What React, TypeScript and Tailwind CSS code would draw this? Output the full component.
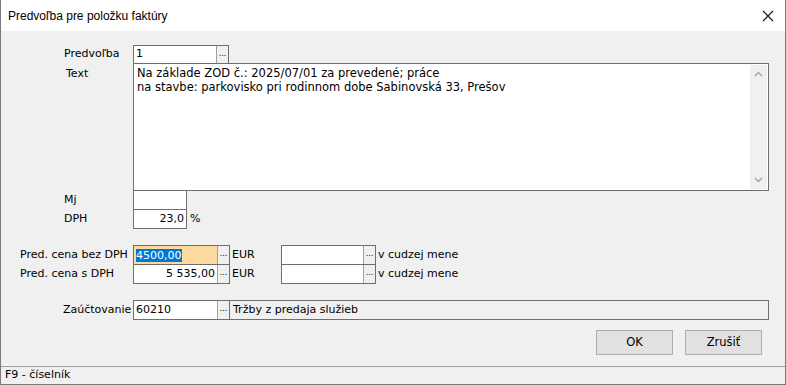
import React from "react";

const body = { fontFamily: '"DejaVu Sans", Verdana, sans-serif' };

function Dots() {
  return (
    <div className="w-[12px] h-full flex items-center justify-center bg-[#f0f0f0] border-l border-[#a0a0a0] text-[8px] leading-none text-black pb-[2px]">
      ...
    </div>
  );
}

function Field({
  width,
  value,
  right,
  bg = "bg-white",
  picker = true,
  children,
}: {
  width: string;
  value?: string;
  right?: boolean;
  bg?: string;
  picker?: boolean;
  children?: React.ReactNode;
}) {
  return (
    <div className={`flex h-full border border-[#6e6e6e] ${bg}`}>
      <div className={`${width} h-full flex items-center px-[2px] ${right ? "justify-end" : ""}`}>
        {children ?? value}
      </div>
      {picker && <Dots />}
    </div>
  );
}

function Label({ pl, children }: { pl: string; children: React.ReactNode }) {
  return <div className={`w-[132px] ${pl} flex items-center`}>{children}</div>;
}

export default function App() {
  return (
    <div
      className="w-[786px] h-[385px] flex flex-col bg-[#f0f0f0] border-x border-b border-[#7a7a7a] text-[11px] text-black overflow-hidden"
      style={body}
    >
      {/* title bar */}
      <div className="h-[31px] bg-white flex items-center justify-between pl-[7px] pr-[9px] shrink-0">
        <span className="text-[12px]" style={{ fontFamily: '"Liberation Sans", Arial, sans-serif' }}>
          Predvoľba pre položku faktúry
        </span>
        <svg width="12" height="12" viewBox="0 0 12 12" className="mr-[2px]">
          <path d="M1 1 L11 11 M11 1 L1 11" stroke="#111" strokeWidth="1.1" />
        </svg>
      </div>

      <div className="flex-1 flex flex-col pt-[14px]">
        {/* Predvoľba */}
        <div className="flex h-[19px]">
          <Label pl="pl-[63px]">Predvoľba</Label>
          <Field width="w-[82px]" value="1" />
        </div>

        {/* Text */}
        <div className="flex -mt-px">
          <div className="w-[132px] pl-[65px] pt-[3px]">Text</div>
          <div className="w-[636px] h-[128px] border border-[#6e6e6e] bg-white flex">
            <div className="flex-1 px-[3px] pt-[2px] leading-[14px] text-[11.5px]">
              <div>Na základe ZOD č.: 2025/07/01 za prevedené; práce</div>
              <div>na stavbe: parkovisko pri rodinnom dobe Sabinovská 33, Prešov</div>
            </div>
            <div className="w-[17px] my-px mr-px bg-[#f0f0f0] flex flex-col items-center justify-between py-[6px]">
              <svg width="9" height="6" viewBox="0 0 9 6">
                <path d="M1 5 L4.5 1.5 L8 5" stroke="#a3a3a3" strokeWidth="1.4" fill="none" />
              </svg>
              <svg width="9" height="6" viewBox="0 0 9 6">
                <path d="M1 1 L4.5 4.5 L8 1" stroke="#a3a3a3" strokeWidth="1.4" fill="none" />
              </svg>
            </div>
          </div>
        </div>

        {/* Mj */}
        <div className="flex h-[20px] -mt-px">
          <Label pl="pl-[63px]">Mj</Label>
          <Field width="w-[52px]" picker={false} />
        </div>

        {/* DPH */}
        <div className="flex h-[20px] -mt-px">
          <Label pl="pl-[63px]">DPH</Label>
          <Field width="w-[52px]" value="23,0" right picker={false} />
          <span className="ml-[3px] flex items-center">%</span>
        </div>

        {/* ceny */}
        <div className="flex h-[20px] mt-[16px]">
          <Label pl="pl-[19px]">Pred. cena bez DPH</Label>
          <Field width="w-[83px]" bg="bg-[#fcd99d]">
            <span className="bg-[#0078d7] text-white leading-[13px]">4500,00</span>
          </Field>
          <span className="w-[51px] pl-[2px] flex items-center">EUR</span>
          <Field width="w-[81px]" />
          <span className="pl-[2px] flex items-center">v cudzej mene</span>
        </div>
        <div className="flex h-[20px] -mt-px">
          <Label pl="pl-[19px]">Pred. cena s DPH</Label>
          <Field width="w-[83px]" value="5 535,00" right />
          <span className="w-[51px] pl-[2px] flex items-center">EUR</span>
          <Field width="w-[81px]" />
          <span className="pl-[2px] flex items-center">v cudzej mene</span>
        </div>

        {/* Zaúčtovanie */}
        <div className="flex h-[20px] mt-[16px]">
          <Label pl="pl-[62px]">Zaúčtovanie</Label>
          <Field width="w-[83px]" value="60210" />
          <div className="w-[540px] -ml-px border border-[#6e6e6e] bg-[#f0f0f0] flex items-center px-[3px]">
            Tržby z predaja služieb
          </div>
        </div>

        {/* buttons */}
        <div className="flex justify-end gap-[12px] pr-[23px] mt-[10px]">
          <button className="w-[77px] h-[25px] bg-[#e1e1e1] border border-[#adadad] text-[11.5px]">OK</button>
          <button className="w-[77px] h-[25px] bg-[#e1e1e1] border border-[#adadad] text-[11.5px]">Zrušiť</button>
        </div>
      </div>

      {/* status bar */}
      <div className="h-[18px] shrink-0 border-t border-[#a0a0a0] flex items-center pl-[4px]">
        F9 - číselník
      </div>
    </div>
  );
}
